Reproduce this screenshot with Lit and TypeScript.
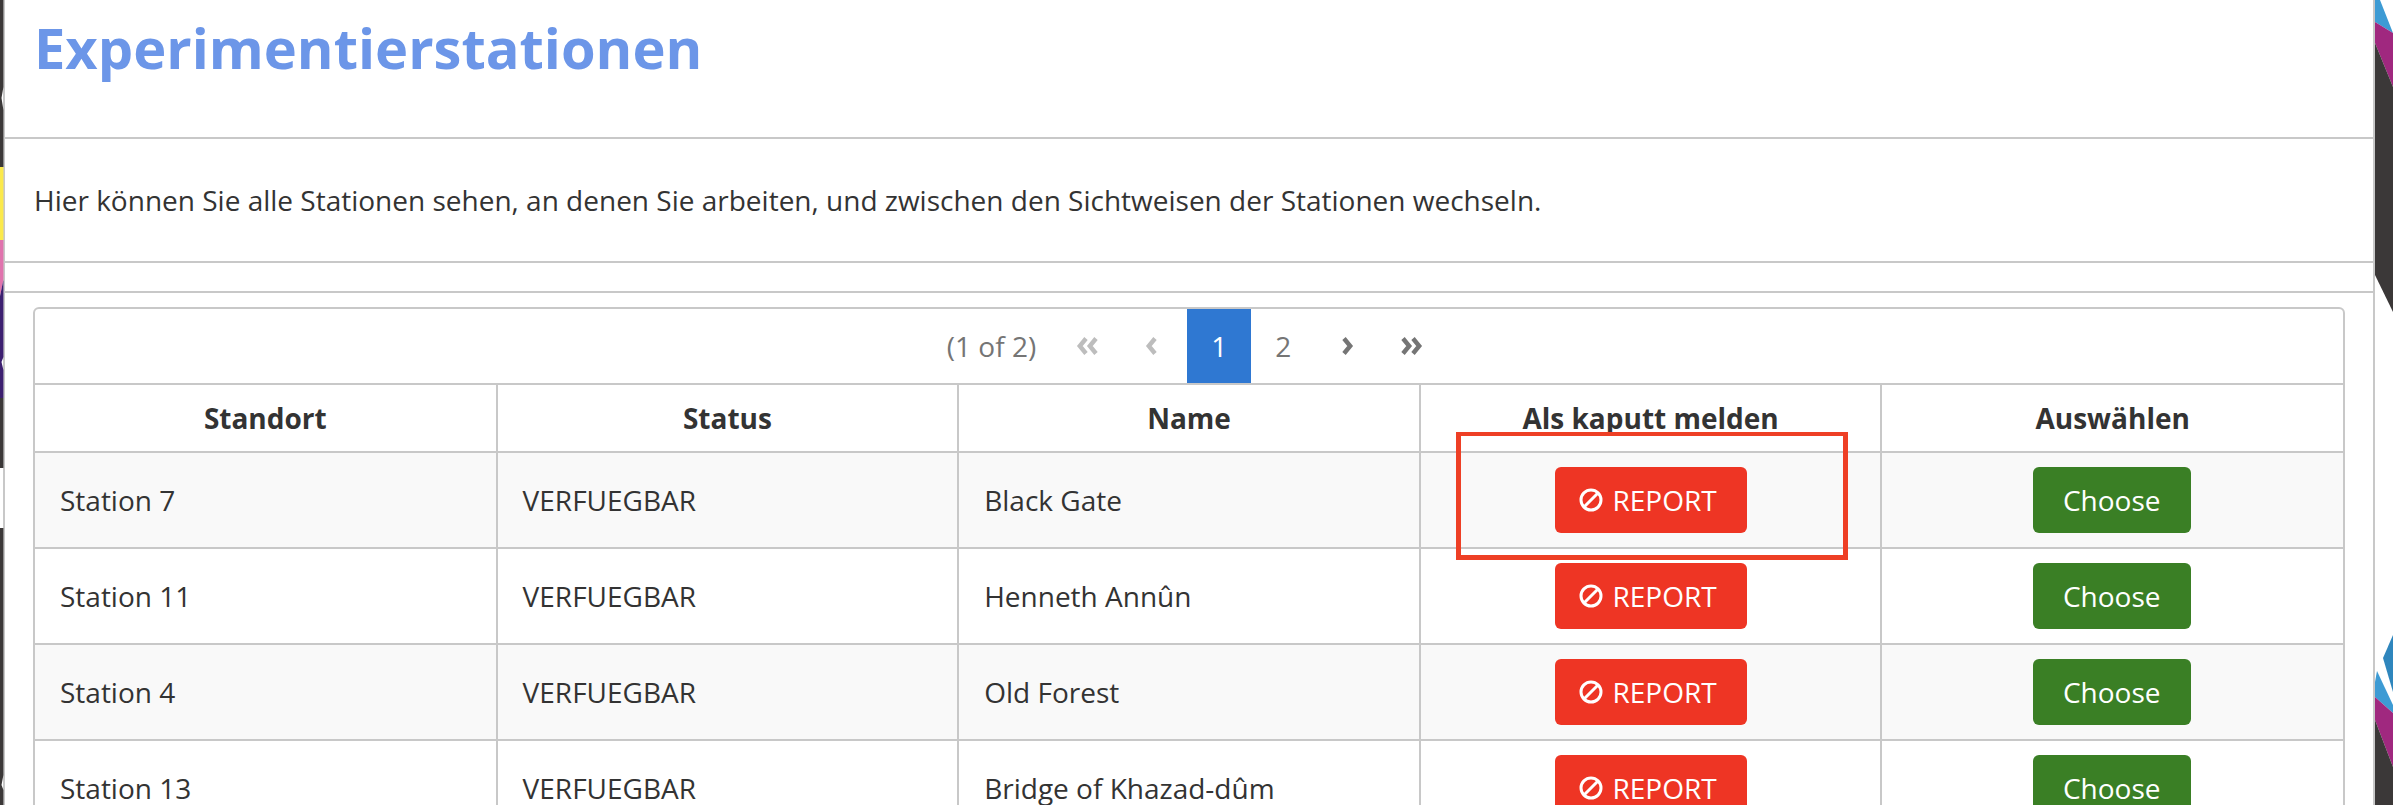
import {css, html, LitElement, svg} from 'lit';
import {customElement} from 'lit/decorators.js';

const rows = [
  ['Station 7', 'VERFUEGBAR', 'Black Gate'],
  ['Station 11', 'VERFUEGBAR', 'Henneth Annûn'],
  ['Station 4', 'VERFUEGBAR', 'Old Forest'],
  ['Station 13', 'VERFUEGBAR', 'Bridge of Khazad-dûm'],
];

const chevron = (points: string) => svg`<polyline points=${points} fill="none" stroke="currentColor" stroke-width="4.4" />`;

@customElement('app-root')
export class AppRoot extends LitElement {
  static styles = css`
    :host {
      display: block;
      height: 805px;
      overflow: hidden;
      position: relative;
      background: #fff;
      font-family: 'Open Sans', 'Noto Sans', sans-serif;
      color: #333;
    }
    .decor-left, .decor-right {
      position: absolute;
      top: 0;
      height: 805px;
    }
    .decor-left { left: 0; width: 4px; }
    .decor-right { left: 2375px; width: 18px; }
    .panel {
      margin-left: 3px;
      width: 2372px;
      box-sizing: border-box;
      height: 805px;
      border-left: 2px solid #c8c8c8;
      border-right: 2px solid #c8c8c8;
    }
    .head {
      height: 139px;
      box-sizing: border-box;
      padding: 9px 0 0 29px;
      border-bottom: 2px solid #c8c8c8;
    }
    h1 {
      margin: 0;
      font-size: 56px;
      line-height: 76px;
      font-weight: 700;
      color: #6c96e8;
    }
    .intro {
      height: 124px;
      box-sizing: border-box;
      padding-left: 29px;
      display: flex;
      align-items: center;
      border-bottom: 2px solid #c8c8c8;
      font-size: 28px;
    }
    .spacer {
      height: 28px;
      border-bottom: 2px solid #c8c8c8;
    }
    .content {
      padding: 14px 28px 0 28px;
    }
    .card {
      border: 2px solid #c8c8c8;
      border-radius: 6px 6px 0 0;
    }
    .pager {
      height: 74px;
      padding-left: 12px;
      display: flex;
      justify-content: center;
      align-items: center;
      color: #757575;
      font-size: 28px;
      border-bottom: 2px solid #c8c8c8;
    }
    .count { margin-right: 23px; }
    .page {
      width: 64px;
      height: 74px;
      display: flex;
      align-items: center;
      justify-content: center;
    }
    .page.active { background: #2f78d2; color: #fff; }
    .page.off { color: #bdbdbd; }
    .page svg { width: 24px; height: 24px; }
    .page.off svg { margin-right: 7px; }
    table {
      width: 100%;
      border-collapse: collapse;
      table-layout: fixed;
      font-size: 28px;
    }
    th, td {
      border-left: 2px solid #c8c8c8;
      border-bottom: 2px solid #c8c8c8;
      padding: 0;
    }
    th:first-child, td:first-child { border-left: 0; }
    th { height: 66px; font-weight: 700; }
    td { height: 94px; }
    td.text { padding-left: 25px; }
    td.action { text-align: center; }
    tbody tr:nth-child(odd) { background: #f9f9f9; }
    .btn {
      display: inline-flex;
      align-items: center;
      justify-content: center;
      height: 66px;
      border-radius: 6px;
      color: #fff;
      font: inherit;
      border: 0;
      padding: 0;
      vertical-align: middle;
    }
    .report { width: 192px; background: #ee3524; gap: 9px; padding-right: 5px; }
    .report svg { width: 24px; height: 24px; }
    .choose { width: 158px; background: #3a7f25; margin-right: 2px; }
    .marker {
      position: absolute;
      left: 1456px;
      top: 432px;
      width: 392px;
      height: 128px;
      box-sizing: border-box;
      border: solid #ee3f25;
      border-width: 4px 5px 5px;
      pointer-events: none;
    }
  `;

  render() {
    return html`
      <svg class="decor-left" viewBox="0 0 4 805" preserveAspectRatio="none">
        <polygon points="0,0 3.4,0 3.4,87 1.5,98 3.4,110 3.4,167 0,167" fill="#3b3838" />
        <rect y="167" width="3.4" height="73" fill="#fbe94b" />
        <polygon points="0,240 3.4,240 3.4,280 0,296" fill="#e073ad" />
        <polygon points="0,296 3.4,280 3.4,357 1.5,362 3.4,370 3.4,398 0,398" fill="#3c1f70" />
        <rect y="398" width="3.4" height="70" fill="#3b3838" />
        <polygon points="0,528 3.4,528 3.4,775 1.5,785 3.4,790 3.4,805 0,805" fill="#3b3838" />
      </svg>
      <svg class="decor-right" viewBox="0 0 18 805">
        <polygon points="0,0 5,0 18,33 0,22" fill="#3d9bd4" />
        <polygon points="0,22 18,33 18,87 0,43" fill="#a0287f" />
        <polygon points="0,43 18,87 18,312 0,275" fill="#3b3838" />
        <polygon points="8,658 18,635 18,692" fill="#2f86bd" />
        <polygon points="0,682 2,671 18,705 18,713 0,697" fill="#3d9bd4" />
        <polygon points="0,697 18,713 18,767 0,720" fill="#a0287f" />
        <polygon points="0,720 18,767 18,805 0,805" fill="#3b3838" />
      </svg>
      <div class="panel">
        <div class="head"><h1>Experimentierstationen</h1></div>
        <div class="intro">Hier können Sie alle Stationen sehen, an denen Sie arbeiten, und zwischen den Sichtweisen der Stationen wechseln.</div>
        <div class="spacer"></div>
        <div class="content">
          <div class="card">
            <div class="pager">
              <span class="count">(1 of 2)</span>
              <span class="page off"><svg viewBox="0 0 24 24">${chevron('10,4.5 3.8,12 10,19.5')}${chevron('20,4.5 13.8,12 20,19.5')}</svg></span>
              <span class="page off"><svg viewBox="0 0 24 24">${chevron('15,4.5 8.8,12 15,19.5')}</svg></span>
              <span class="page active">1</span>
              <span class="page">2</span>
              <span class="page"><svg viewBox="0 0 24 24">${chevron('9,4.5 15.2,12 9,19.5')}</svg></span>
              <span class="page"><svg viewBox="0 0 24 24">${chevron('4,4.5 10.2,12 4,19.5')}${chevron('14,4.5 20.2,12 14,19.5')}</svg></span>
            </div>
            <table>
              <thead>
                <tr><th>Standort</th><th>Status</th><th>Name</th><th>Als kaputt melden</th><th>Auswählen</th></tr>
              </thead>
              <tbody>
                ${rows.map(
                  (r) => html`<tr>
                    ${r.map((c) => html`<td class="text">${c}</td>`)}
                    <td class="action">
                      <button class="btn report">
                        <svg viewBox="0 0 24 24" fill="none" stroke="#fff" stroke-width="3"><circle cx="12" cy="12" r="10" /><line x1="5" y1="19" x2="19" y2="5" /></svg>
                        REPORT
                      </button>
                    </td>
                    <td class="action"><button class="btn choose">Choose</button></td>
                  </tr>`
                )}
              </tbody>
            </table>
          </div>
        </div>
      </div>
      <div class="marker"></div>
    `;
  }
}
